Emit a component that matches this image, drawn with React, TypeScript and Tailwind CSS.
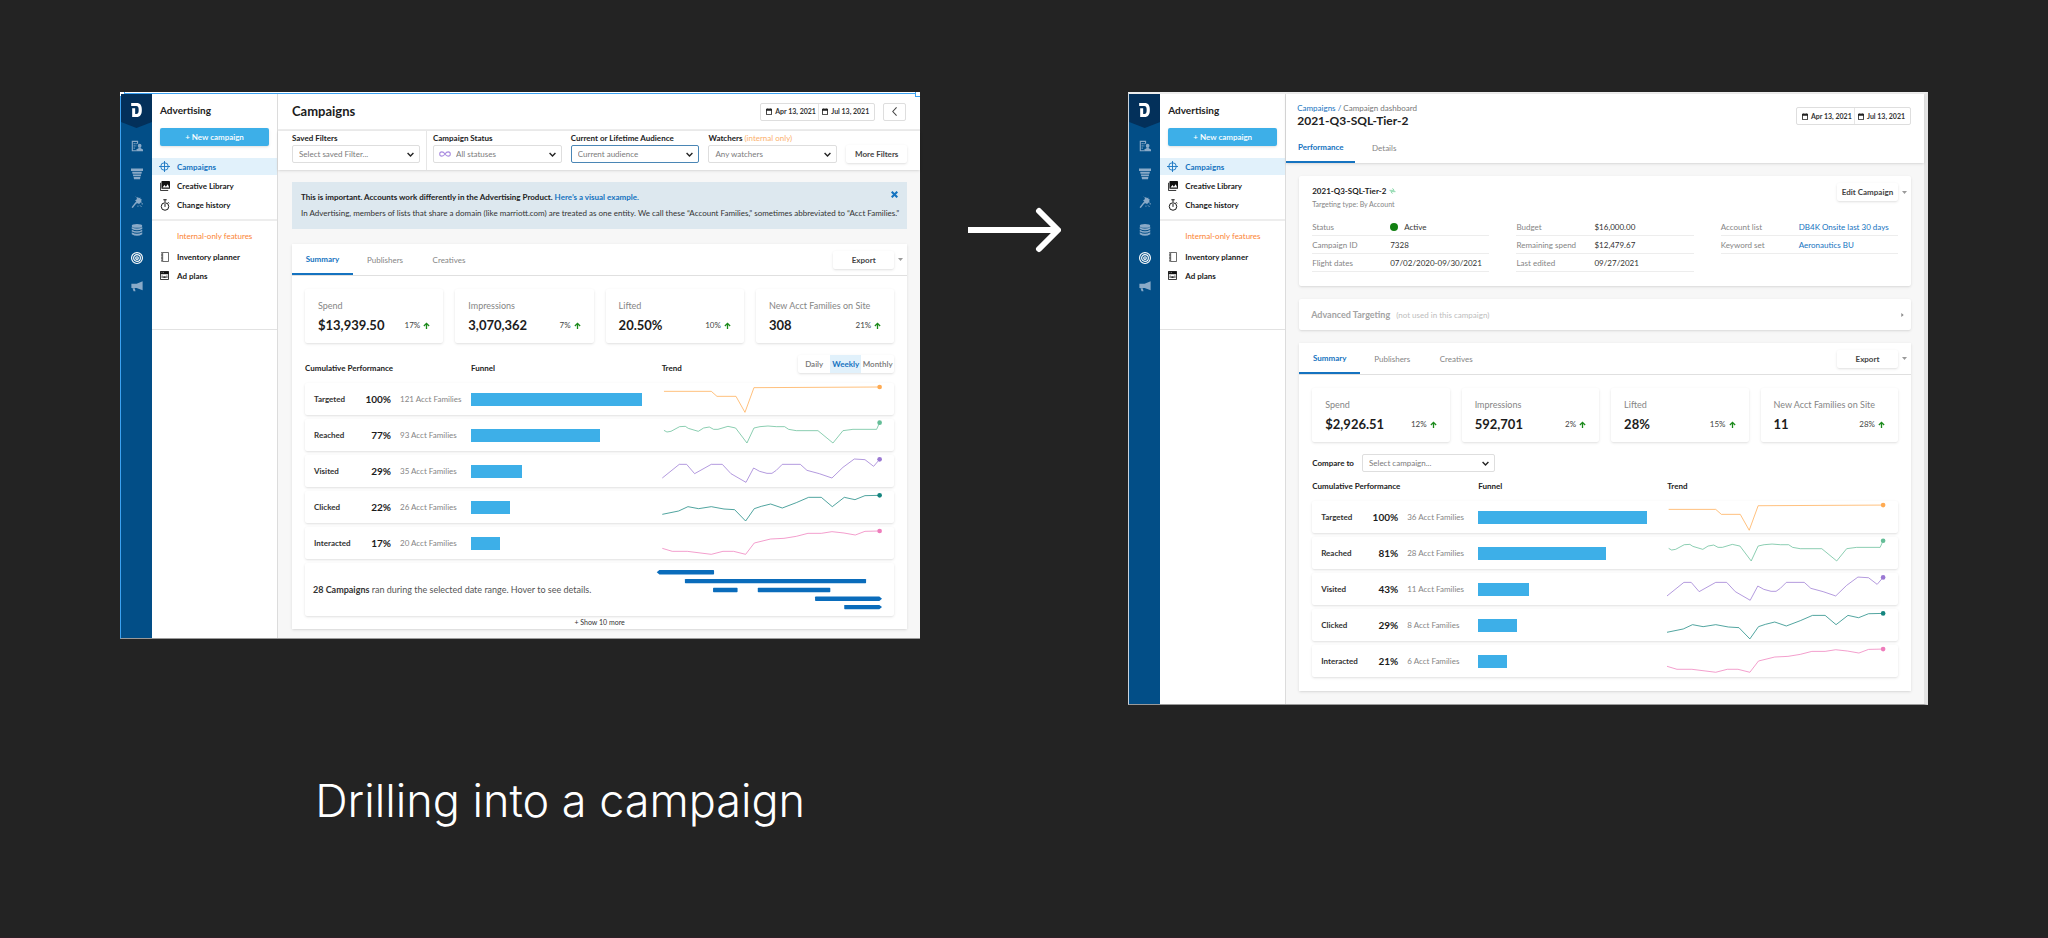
import type { ReactNode } from "react";

const GREEN = "#1b8a1b";

function Chevron() {
  return (
    <svg viewBox="0 0 12 8" className="pointer-events-none absolute right-1.5 h-[5px] w-[7px]" fill="none" stroke="#222" strokeWidth="2.4">
      <path d="M1 1.5 6 6.5 11 1.5" />
    </svg>
  );
}

function Caret() {
  return (
    <svg viewBox="0 0 10 6" className="h-[3px] w-[5px]" fill="#9a9a9a">
      <path d="M0 0h10L5 6z" />
    </svg>
  );
}

function ArrowUp() {
  return (
    <svg viewBox="0 0 14 16" className="h-[7px] w-[7px]" fill="none" stroke={GREEN} strokeWidth="3">
      <path d="M7 16V3M1 9l6-6 6 6" />
    </svg>
  );
}

function CalendarIcon() {
  return (
    <svg viewBox="0 0 18 20" className="h-[7px] w-[6px] shrink-0" fill="#222">
      <path d="M4 0h3v2h4V0h3v2h4v18H0V2h4zM2.500 7.500v10h13v-10z" fillRule="evenodd" />
    </svg>
  );
}

function TargetIcon() {
  return (
    <svg viewBox="0 0 32 32" className="size-[11px]" fill="none" stroke="#1573c0" strokeWidth="2.600">
      <circle cx="16" cy="16" r="11" />
      <path d="M16 0v32M0 16h32" />
    </svg>
  );
}

function LibraryIcon() {
  return (
    <svg viewBox="0 0 28 28" className="size-[10px]">
      <path d="M6 0h20a2 2 0 0 1 2 2v18a2 2 0 0 1-2 2H6a2 2 0 0 1-2-2V2a2 2 0 0 1 2-2z" fill="#111" />
      <path d="M7 18.500 12.500 11l4 5 5-7 4.500 9.500z" fill="#fff" />
      <path d="M1.200 5v21.500H23" fill="none" stroke="#111" strokeWidth="2.400" />
    </svg>
  );
}

function StopwatchIcon() {
  return (
    <svg viewBox="0 0 26 32" className="h-[12px] w-[10px]" fill="none" stroke="#111" strokeWidth="2.600">
      <circle cx="13" cy="20" r="10" />
      <path d="M13 13v8M8.500 2h9M13 2v6M21 8.500l3 3" />
    </svg>
  );
}

function NotebookIcon() {
  return (
    <svg viewBox="0 0 24 30" className="h-[10px] w-[8px]" fill="none" stroke="#222">
      <path d="M5 1.500h17.500v27H5z" strokeWidth="2" />
      <path d="M2.500 1v28" strokeWidth="3.500" strokeDasharray="2.500 2" />
    </svg>
  );
}

function AdPlanIcon() {
  return (
    <svg viewBox="0 0 28 28" className="size-[9px]">
      <path d="M1.500 1.500h25v25h-25z" fill="#fff" stroke="#111" strokeWidth="2.600" />
      <path d="M1 1h26v9H1z" fill="#111" />
      <path d="M5 14h3v8H5zM10 16h8v6h-8zM20 14h3v8h-3z" fill="#333" />
      <path d="M5 5h2M10 5h2" stroke="#fff" strokeWidth="2" />
    </svg>
  );
}

const RAIL_ICONS: { name: string; active?: boolean; art: ReactNode }[] = [
  {
    name: "Accounts",
    art: (
      <>
        <path d="M2 2h17v8h-3V5H5v22h9v3H2z" fill="currentColor" />
        <path d="M7 8h3v3H7zM12 8h3v3h-3zM7 14h3v3H7zM7 20h3v3H7zM12 14h2v3h-2z" fill="currentColor" />
        <circle cx="23" cy="15" r="5" fill="currentColor" />
        <path d="M14 30v-5l6-3v-3h6v3l6 3v5z" fill="currentColor" />
      </>
    ),
  },
  {
    name: "Funnel",
    art: <path d="M0 1h32v7H0zM3 10h26l-1 5H4zM5 17h22l-1 5H6zM7 24h18l-1 6H8z" fill="currentColor" />,
  },
  {
    name: "Magic",
    art: (
      <>
        <path d="M3 31 14 17" stroke="currentColor" strokeWidth="4" />
        <path d="m19 3 2 3 4-2v4l4 1-2 4 2 4-5 1-2 4-4-3-5 1 1-5-3-4 4-2 1-5z" fill="currentColor" />
        <path d="M17 27h3M24 25l4 4M28 21h4M13 2l2 2" stroke="currentColor" strokeWidth="2.500" />
      </>
    ),
  },
  {
    name: "Data",
    art: (
      <>
        <ellipse cx="16" cy="5" rx="14" ry="5" fill="currentColor" />
        <path d="M2 8q14 8 28 0v5q-14 7-28 0zM2 15q14 8 28 0v5q-14 7-28 0zM2 22q14 8 28 0v5q-14 8-28 0z" fill="currentColor" />
      </>
    ),
  },
  {
    name: "Advertising",
    active: true,
    art: (
      <g fill="none" stroke="currentColor">
        <circle cx="16" cy="16" r="14.500" strokeWidth="3" />
        <circle cx="16" cy="16" r="9" strokeWidth="3" />
        <circle cx="16" cy="16" r="3.500" strokeWidth="3" />
      </g>
    ),
  },
  {
    name: "Broadcast",
    art: (
      <>
        <path d="M31 3v24L15 21H1V10h14z" fill="currentColor" />
        <path d="M4 22h6l2 8H7z" fill="currentColor" />
      </>
    ),
  },
];

function Rail() {
  return (
    <nav aria-label="Products" className="flex w-[31px] shrink-0 flex-col items-center bg-[#024e87]">
      <div className="flex h-[34px] w-full justify-center bg-[#03305a] pt-[9px] [clip-path:polygon(0_0,100%_0,100%_82%,50%_100%,0_82%)]">
        <svg viewBox="0 0 32 42" className="h-[14px] w-[11px]" fill="#fff">
          <path d="M0 0H16C28 0 32 8 32 21S28 42 16 42H3V16H12V33H15C21 33 22.500 29 22.500 21S21 9 15 9H0z" />
        </svg>
      </div>
      <ul className="mt-3 flex flex-col gap-4">
        {RAIL_ICONS.map((item) => (
          <li key={item.name}>
            <a href="#" aria-label={item.name} className={item.active ? "block text-white" : "block text-[#8aaac8]"}>
              <svg viewBox="0 0 32 32" className="size-3">
                {item.art}
              </svg>
            </a>
          </li>
        ))}
      </ul>
    </nav>
  );
}

function NavItem({ icon, label, active }: { icon: ReactNode; label: string; active?: boolean }) {
  return (
    <a
      href="#"
      className={
        active
          ? "flex h-[17px] items-center bg-[#e1f1fb] font-bold text-[#1573c0]"
          : "flex h-[17px] items-center font-bold text-[#1a1a1a]"
      }
    >
      <span className="flex w-[25px] justify-center">{icon}</span>
      {label}
    </a>
  );
}

function Sidebar() {
  return (
    <aside className="w-[126px] shrink-0 border-r border-[#dcdcdc] bg-white text-[8px]">
      <h2 className="mt-[10px] ml-2 text-[10px] leading-3 font-bold text-[#222]">Advertising</h2>
      <button className="mx-2 mt-3 block h-[18px] w-[109px] rounded-xs bg-[#3dafe8] text-center font-semibold text-white shadow-sm">
        + New campaign
      </button>
      <div className="mt-3 flex flex-col gap-0.5">
        <NavItem icon={<TargetIcon />} label="Campaigns" active />
        <NavItem icon={<LibraryIcon />} label="Creative Library" />
        <NavItem icon={<StopwatchIcon />} label="Change history" />
      </div>
      <div className="mt-1.5 border-t-2 border-[#ededed] pt-[10px] pl-[25px] leading-[10px] text-[#fb8334]">
        Internal-only features
      </div>
      <div className="mt-[7px] flex flex-col gap-0.5 border-b border-[#e2e2e2] pb-[45px]">
        <NavItem icon={<NotebookIcon />} label="Inventory planner" />
        <NavItem icon={<AdPlanIcon />} label="Ad plans" />
      </div>
    </aside>
  );
}

function DateRange() {
  return (
    <div className="flex h-[18px] w-[115px] rounded-xs border border-[#dedede] bg-white text-[7px] font-bold text-[#333]">
      <button className="flex flex-1 items-center gap-[3px] border-r border-[#e6e6e6] pl-[5px] whitespace-nowrap">
        <CalendarIcon />
        Apr 13, 2021
      </button>
      <button className="flex flex-1 items-center gap-[3px] pl-[3px] whitespace-nowrap">
        <CalendarIcon />
        Jul 13, 2021
      </button>
    </div>
  );
}

function SelectBox({ id, value, focused, icon }: { id: string; value: string; focused?: boolean; icon?: ReactNode }) {
  return (
    <div className="relative flex items-center">
      {icon}
      <select
        id={id}
        className={
          "h-[18px] w-full appearance-none rounded-xs border bg-white text-[8px] text-[#7b7b7b] " +
          (focused ? "border-[#4a86b5] " : "border-[#dedede] ") +
          (icon ? "pl-[22px]" : "pl-1.5")
        }
      >
        <option>{value}</option>
      </select>
      <Chevron />
    </div>
  );
}

function Filter({ id, label, note, children }: { id: string; label: string; note?: string; children: ReactNode }) {
  return (
    <div className="min-w-0 flex-1">
      <label htmlFor={id} className="mb-0.5 block text-[8px] leading-[10px] font-bold whitespace-nowrap text-[#222]">
        {label} {note && <span className="font-normal text-[#fbb06b]">{note}</span>}
      </label>
      {children}
    </div>
  );
}

function InfinityIcon() {
  return (
    <svg viewBox="0 0 34 16" className="pointer-events-none absolute left-1.5 h-[6px] w-[12px]" fill="none" stroke="#a98be0" strokeWidth="3">
      <path d="M17 8C13 2 10 2 8 2a6 6 0 0 0 0 12c2 0 5 0 9-6s7-6 9-6a6 6 0 0 1 0 12c-2 0-5 0-9-6z" />
    </svg>
  );
}

function SummaryTabs() {
  return (
    <div className="flex h-8 items-stretch border-b border-[#e0e0e0] text-[8px]">
      <button className="w-[61px] border-b-2 border-[#1573c0] font-bold text-[#1573c0]">Summary</button>
      <button className="w-[64px] text-[#858585]">Publishers</button>
      <button className="w-[64px] text-[#858585]">Creatives</button>
      <div className="ml-auto flex items-center gap-[3px] pr-[3px]">
        <button className="h-[18px] w-[61px] rounded-xs bg-white font-bold text-[#444] shadow">Export</button>
        <button aria-label="Export options" className="flex w-[7px] justify-center">
          <Caret />
        </button>
      </div>
    </div>
  );
}

type Stat = { label: string; value: string; change: string };

function Stats({ stats }: { stats: Stat[] }) {
  return (
    <div className="grid grid-cols-4 gap-3">
      {stats.map((s) => (
        <div key={s.label} className="h-[54px] rounded-xs bg-white px-[13px] pt-[11px] shadow">
          <div className="text-[9px] leading-[11px] whitespace-nowrap text-[#858585]">{s.label}</div>
          <div className="mt-1.5 flex items-center justify-between leading-4">
            <span className="text-[13px] font-bold text-[#1c1c1c]">{s.value}</span>
            <span className="flex items-center gap-[3px] text-[8px] text-[#444]">
              {s.change}
              <ArrowUp />
            </span>
          </div>
        </div>
      ))}
    </div>
  );
}

const STAGES = [
  {
    name: "Targeted",
    width: 100,
    color: "#ffab52",
    points: "5,25 147,25 164,40 221,40 248,88 275,14 652,12",
    end: [652, 12],
  },
  {
    name: "Reached",
    width: 75.5,
    color: "#64bd97",
    points:
      "5,34 14,39 26,37 52,23 69,22 78,28 108,37 124,27 141,24 154,31 167,31 197,22 220,27 254,72 275,27 293,23 317,21 342,23 367,23 379,31 402,35 467,35 512,72 542,35 572,31 643,31 652,11",
    end: [652, 11],
  },
  {
    name: "Visited",
    width: 30,
    color: "#9a78d3",
    points:
      "0,69 51,28 73,28 97,56 147,28 180,28 206,56 251,82 274,39 292,49 314,55 329,55 342,46 360,28 414,28 434,46 471,56 509,69 542,37 576,12 608,14 634,34 652,13",
    end: [652, 13],
  },
  {
    name: "Clicked",
    width: 23,
    color: "#15857f",
    points:
      "0,70 49,60 77,47 109,53 147,47 185,54 217,56 250,90 276,53 297,46 325,39 360,51 402,35 439,19 477,19 510,47 546,19 578,26 608,14 652,13",
    end: [652, 13],
  },
  {
    name: "Interacted",
    width: 17,
    color: "#ef7dbc",
    points:
      "0,64 30,73 75,73 147,82 182,73 214,73 250,82 276,48 325,36 365,34 402,28 437,19 477,19 509,14 545,18 579,24 608,13 652,12",
    end: [652, 12],
  },
];

const FUNNEL_GRID = "grid grid-cols-[86px_80px_1fr_1.22fr]";

function Funnel({ rows, toggle }: { rows: [string, number][]; toggle?: boolean }) {
  return (
    <table className="block">
      <thead className="block">
        <tr className={FUNNEL_GRID + " items-end text-left text-[8px] leading-[10px] text-[#222]"}>
          <th className="col-span-2 font-bold">Cumulative Performance</th>
          <th className="font-bold">Funnel</th>
          <th className="flex items-end justify-between font-bold">
            Trend
            {toggle && (
              <span className="flex h-[18px] w-[96px] rounded-xs bg-white text-[#777] shadow">
                <button className="flex-1 font-semibold">Daily</button>
                <button className="w-[31px] bg-[#e1f1fb] font-bold text-[#1573c0]">Weekly</button>
                <button className="w-[33px] font-semibold">Monthly</button>
              </span>
            )}
          </th>
        </tr>
      </thead>
      <tbody className="mt-[10px] flex flex-col gap-1">
        {STAGES.map((stage, i) => (
          <tr key={stage.name} className={FUNNEL_GRID + " h-8 items-center rounded-xs bg-white shadow"}>
            <td className="flex items-center justify-between pl-[9px]">
              <span className="text-[8px] font-bold text-[#333]">{stage.name}</span>
              <span className="text-[10px] font-bold text-[#1c1c1c]">{rows[i][0]}</span>
            </td>
            <td className="pl-[9px] text-[8px] whitespace-nowrap text-[#858585]">{rows[i][1]} Acct Families</td>
            <td className="pr-5">
              <div className="h-[13px] bg-[#3dafe8]" style={{ width: `${stage.width}%` }} />
            </td>
            <td>
              <svg viewBox="0 0 696 96" className="block h-8 w-full" fill="none">
                <polyline points={stage.points} stroke={stage.color} strokeWidth="3" strokeOpacity="0.75" />
                <circle cx={stage.end[0]} cy={stage.end[1]} r="7" fill={stage.color} />
              </svg>
            </td>
          </tr>
        ))}
      </tbody>
    </table>
  );
}

function Timeline() {
  return (
    <div className="mt-1 flex h-[53px] items-center justify-between rounded-xs bg-white pl-2 shadow">
      <p className="text-[9px] whitespace-nowrap text-[#555]">
        <b className="text-[#333]">28 Campaigns</b> ran during the selected date range. Hover to see details.
      </p>
      <svg viewBox="0 0 720 160" className="h-[53px] w-[240px]" fill="#0a6cbb">
        <path d="M6 28 14 21.500H177a2 2 0 0 1 2 2v9a2 2 0 0 1-2 2H14z" />
        <rect x="91" y="48" width="547" height="13" rx="2" />
        <rect x="176" y="75" width="74" height="13" rx="2" />
        <rect x="311" y="75" width="219" height="13" rx="2" />
        <path d="M686 108 678 101.500H486a2 2 0 0 0-2 2v9a2 2 0 0 0 2 2H678z" />
        <path d="M686 133 678 126.500H574a2 2 0 0 0-2 2v9a2 2 0 0 0 2 2H678z" />
      </svg>
    </div>
  );
}

function CampaignsScreen() {
  return (
    <section aria-label="Campaigns" className="relative flex border-b border-l border-b-[#9a9a9a] border-l-[#3ba2f2] bg-[#f7f7f7]">
      <div className="absolute inset-x-0 top-0 h-0.5 border-b border-[#3ba2f2] bg-white" />
      <div className="absolute top-0 -left-px size-[5px] border-r border-b border-[#3ba2f2] bg-white" />
      <div className="absolute top-0 right-0 size-[5px] border-b border-l border-[#3ba2f2] bg-white" />
      <div className="flex w-full pt-0.5">
        <Rail />
        <Sidebar />
        <main className="min-w-0 flex-1">
          <header className="flex h-[37px] items-center border-b-2 border-[#ededed] bg-white pr-[14px] pl-[14px]">
            <h1 className="flex-1 text-[13px] font-bold text-[#1c1c1c]">Campaigns</h1>
            <DateRange />
            <button aria-label="Back" className="ml-2 flex h-[18px] w-[23px] items-center justify-center rounded-xs border border-[#dedede]">
              <svg viewBox="0 0 14 26" className="h-[9px] w-[5px]" fill="none" stroke="#444" strokeWidth="3">
                <path d="M13 1 2 13l11 12" />
              </svg>
            </button>
          </header>
          <div className="flex h-[39px] bg-white pr-[13px] pl-[14px] shadow">
            <div className="flex w-[135px] shrink-0 border-r border-[#e6e6e6] pt-0.5 pr-1.5">
              <Filter id="saved" label="Saved Filters">
                <SelectBox id="saved" value="Select saved Filter..." />
              </Filter>
            </div>
            <div className="flex min-w-0 flex-1 gap-[9px] pt-0.5 pl-1.5">
              <Filter id="status" label="Campaign Status">
                <SelectBox id="status" value="All statuses" icon={<InfinityIcon />} />
              </Filter>
              <Filter id="audience" label="Current or Lifetime Audience">
                <SelectBox id="audience" value="Current audience" focused />
              </Filter>
              <Filter id="watchers" label="Watchers" note="(internal only)">
                <SelectBox id="watchers" value="Any watchers" />
              </Filter>
              <button className="mt-3 h-[18px] w-[61px] rounded-xs bg-white text-[8px] font-bold text-[#444] shadow">
                More Filters
              </button>
            </div>
          </div>
          <div className="pt-3 pr-[13px] pb-[9px] pl-[14px]">
            <div className="flex h-[47px] justify-between bg-[#dde8ef] px-[9px] pt-[9px] text-[8px]">
              <div className="text-[#333]">
                <p className="leading-3 font-bold text-[#222]">
                  This is important. Accounts work differently in the Advertising Product.{" "}
                  <a href="#" className="text-[#1573c0]">
                    Here’s a visual example.
                  </a>
                </p>
                <p className="mt-1 leading-3 whitespace-nowrap">
                  In Advertising, members of lists that share a domain (like marriott.com) are treated as one entity. We
                  call these “Account Families,” sometimes abbreviated to “Acct Families.”
                </p>
              </div>
              <button aria-label="Dismiss" className="-ml-2 flex h-[7px] w-[7px]">
                <svg viewBox="0 0 20 20" className="size-[7px]" fill="none" stroke="#1573c0" strokeWidth="6">
                  <path d="m2 2 16 16M18 2 2 18" />
                </svg>
              </button>
            </div>
            <div className="mt-[15px] bg-white pb-[1px] shadow">
              <SummaryTabs />
              <div className="px-[13px] pt-[13px]">
                <Stats
                  stats={[
                    { label: "Spend", value: "$13,939.50", change: "17%" },
                    { label: "Impressions", value: "3,070,362", change: "7%" },
                    { label: "Lifted", value: "20.50%", change: "10%" },
                    { label: "New Acct Families on Site", value: "308", change: "21%" },
                  ]}
                />
                <div className="mt-3">
                  <Funnel
                    toggle
                    rows={[
                      ["100%", 121],
                      ["77%", 93],
                      ["29%", 35],
                      ["22%", 26],
                      ["17%", 20],
                    ]}
                  />
                </div>
                <Timeline />
                <button className="mx-auto block h-3 text-[7px] leading-3 text-[#333]">+ Show 10 more</button>
              </div>
            </div>
          </div>
        </main>
      </div>
    </section>
  );
}

function Fact({ label, children, link }: { label: string; children: ReactNode; link?: boolean }) {
  return (
    <div className="flex h-[18px] items-center border-b border-[#ededed]">
      <dt className="w-[78px] text-[#858585]">{label}</dt>
      <dd className="flex items-center whitespace-nowrap text-[#333]">
        {link ? (
          <a href="#" className="text-[#1573c0]">
            {children}
          </a>
        ) : (
          children
        )}
      </dd>
    </div>
  );
}

function DashboardScreen() {
  return (
    <section
      aria-label="Campaign dashboard"
      className="flex border-t-2 border-r-4 border-b border-l border-t-[#ededed] border-r-[#e4e4e4] border-b-[#9a9a9a] border-l-[#c9d3dc] bg-[#f7f7f7]"
    >
      <Rail />
      <Sidebar />
      <main className="min-w-0 flex-1">
        <header className="flex h-[69px] justify-between bg-white pr-[13px] shadow">
          <div className="flex flex-col">
            <p className="mt-[9px] pl-[11px] text-[8px] leading-[10px] text-[#777]">
              <a href="#" className="text-[#1573c0]">
                Campaigns /
              </a>{" "}
              Campaign dashboard
            </p>
            <h1 className="pl-[11px] text-[12px] leading-4 font-bold text-[#222]">2021-Q3-SQL-Tier-2</h1>
            <div className="mt-auto flex h-[30px] text-[8px]">
              <button className="w-[69px] border-b-2 border-[#1573c0] font-bold text-[#1573c0]">Performance</button>
              <button className="ml-3 w-[34px] text-[#858585]">Details</button>
            </div>
          </div>
          <div className="pt-[13px]">
            <DateRange />
          </div>
        </header>
        <div className="px-[13px] py-[13px]">
          <div className="rounded-xs bg-white px-[13px] pt-[7px] pb-[14px] shadow">
            <div className="flex justify-between">
              <div>
                <h2 className="mt-0.5 flex items-center gap-[3px] text-[8px] leading-3 font-bold text-[#1c1c1c]">
                  2021-Q3-SQL-Tier-2
                  <svg viewBox="0 0 20 18" className="h-[6px] w-[7px]" fill="none" stroke="#8ed9ae" strokeWidth="3">
                    <path d="M1 7h14l-5-6M19 11H5l5 6" />
                  </svg>
                </h2>
                <p className="mt-0.5 text-[7px] leading-[10px] text-[#858585]">Targeting type: By Account</p>
              </div>
              <div className="-mr-[10px] flex h-[18px] items-center gap-[3px]">
                <button className="h-[18px] w-[61px] rounded-xs bg-white text-[8px] font-bold text-[#444] shadow">
                  Edit Campaign
                </button>
                <button aria-label="More actions" className="flex w-[7px] justify-center">
                  <Caret />
                </button>
              </div>
            </div>
            <dl className="mt-[9px] grid grid-cols-3 items-start gap-[27px] text-[8px]">
              <div>
                <Fact label="Status">
                  <span className="mr-1.5 size-2 rounded-full bg-[#128012]" />
                  Active
                </Fact>
                <Fact label="Campaign ID">7328</Fact>
                <Fact label="Flight dates">07/02/2020-09/30/2021</Fact>
              </div>
              <div>
                <Fact label="Budget">$16,000.00</Fact>
                <Fact label="Remaining spend">$12,479.67</Fact>
                <Fact label="Last edited">09/27/2021</Fact>
              </div>
              <div>
                <Fact label="Account list" link>
                  DB4K Onsite last 30 days
                </Fact>
                <Fact label="Keyword set" link>
                  Aeronautics BU
                </Fact>
              </div>
            </dl>
          </div>
          <button className="mt-[13px] flex h-[31px] w-full items-center rounded-xs bg-white pr-[7px] pl-3 shadow">
            <span className="text-[9px] font-bold text-[#a3a3a3]">Advanced Targeting</span>
            <span className="ml-1.5 text-[8px] text-[#bdbdbd]">(not used in this campaign)</span>
            <svg viewBox="0 0 6 10" className="ml-auto h-[4px] w-[3px]" fill="#8a8a8a">
              <path d="M0 0v10l6-5z" />
            </svg>
          </button>
          <div className="mt-[13px] bg-white pb-[14px] shadow">
            <SummaryTabs />
            <div className="px-[13px] pt-[13px]">
              <Stats
                stats={[
                  { label: "Spend", value: "$2,926.51", change: "12%" },
                  { label: "Impressions", value: "592,701", change: "2%" },
                  { label: "Lifted", value: "28%", change: "15%" },
                  { label: "New Acct Families on Site", value: "11", change: "28%" },
                ]}
              />
              <div className="mt-3 mb-[9px] flex items-center gap-2">
                <label htmlFor="compare" className="text-[8px] font-bold text-[#222]">
                  Compare to
                </label>
                <div className="w-[133px]">
                  <SelectBox id="compare" value="Select campaign..." />
                </div>
              </div>
              <Funnel
                rows={[
                  ["100%", 36],
                  ["81%", 28],
                  ["43%", 11],
                  ["29%", 8],
                  ["21%", 6],
                ]}
              />
            </div>
          </div>
        </div>
      </main>
    </section>
  );
}

export default function App() {
  return (
    <div className="min-h-screen border-b border-[#2d1f27] bg-[#232323] px-[120px] pt-[92px] font-['Lato','Open_Sans',sans-serif]">
      <div className="grid grid-cols-[1fr_208px_1fr] items-start">
        <div>
          <CampaignsScreen />
          <p className="mt-[132px] pl-20 text-center font-['Inter',sans-serif] text-[45px] leading-[60px] font-light whitespace-nowrap text-white">
            Drilling into a campaign
          </p>
        </div>
        <svg viewBox="0 0 94 46" className="mt-[115px] ml-[47px] h-[46px] w-[94px]" fill="none" stroke="#fff" strokeWidth="6">
          <path d="M1 23h90" />
          <path d="M72 4 91 23 72 42" strokeLinecap="round" strokeLinejoin="round" />
        </svg>
        <DashboardScreen />
      </div>
    </div>
  );
}
